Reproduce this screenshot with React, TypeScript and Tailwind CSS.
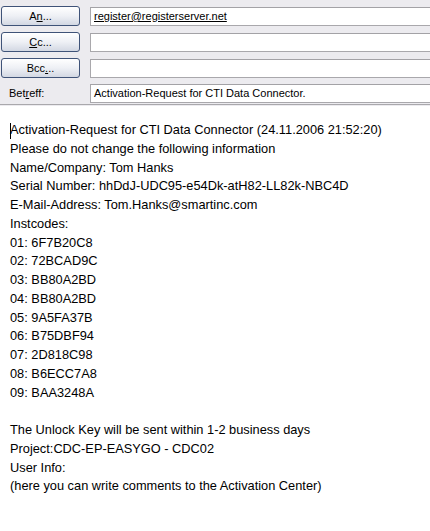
import React from "react";

const hdrFont = { fontFamily: '"Liberation Sans", Arial, sans-serif' };

function Btn({ children }: { children: React.ReactNode }) {
  return (
    <div className="w-[79px] h-[20px] ml-[1px] shrink-0 rounded-[3px] border border-[#3f5378] bg-gradient-to-b from-[#ffffff] via-[#eef0f5] to-[#d3d8e3] flex items-center justify-center text-[11px] text-black leading-none">
      {children}
    </div>
  );
}

function Field({ children }: { children?: React.ReactNode }) {
  return (
    <div className="flex-1 h-[19px] ml-[10px] border-t border-b border-l border-t-[#a3a2a6] border-b-[#a9a8ac] border-l-[#a9a8ac] bg-white flex items-center pl-[3px] text-[11px] text-black leading-none whitespace-nowrap overflow-hidden">
      {children}
    </div>
  );
}

const lines = [
  "Activation-Request for CTI Data Connector (24.11.2006 21:52:20)",
  "Please do not change the following information",
  "Name/Company: Tom Hanks",
  "Serial Number: hhDdJ-UDC95-e54Dk-atH82-LL82k-NBC4D",
  "E-Mail-Address: Tom.Hanks@smartinc.com",
  "Instcodes:",
  "01: 6F7B20C8",
  "02: 72BCAD9C",
  "03: BB80A2BD",
  "04: BB80A2BD",
  "05: 9A5FA37B",
  "06: B75DBF94",
  "07: 2D818C98",
  "08: B6ECC7A8",
  "09: BAA3248A",
  "",
  "The Unlock Key will be sent within 1-2 business days",
  "Project:CDC-EP-EASYGO - CDC02",
  "User Info:",
  "(here you can write comments to the Activation Center)",
];

export default function App() {
  return (
    <div className="w-[430px] h-[531px] bg-white overflow-hidden">
      <div className="bg-[#ecebef] pt-[6px] h-[104px] flex flex-col" style={hdrFont}>
        <div className="flex items-end h-[20px]">
          <Btn>
            A<span className="underline">n</span>...
          </Btn>
          <Field>
            <span className="underline">register@registerserver.net</span>
          </Field>
        </div>
        <div className="flex items-end h-[20px] mt-[6px]">
          <Btn>
            <span className="underline">C</span>c...
          </Btn>
          <Field />
        </div>
        <div className="flex items-end h-[20px] mt-[6px]">
          <Btn>
            Bcc<span className="underline">.</span>..
          </Btn>
          <Field />
        </div>
        <div className="flex items-center h-[20px] mt-[5px]">
          <div className="w-[80px] shrink-0 pl-[9px] text-[11px] text-black leading-none">
            Bet<span className="underline">r</span>eff:
          </div>
          <Field>Activation-Request for CTI Data Connector.</Field>
        </div>
      </div>
      <div className="h-[2px] bg-[#ecebef] border-t border-[#a9a8ac]" />
      <div
        className="pl-[10px] pt-[15px] text-[12.8px] leading-[18.75px] text-black"
        style={{ fontFamily: '"Liberation Sans", Arial, sans-serif' }}
      >
        {lines.map((l, i) => (
          <div key={i} className="whitespace-nowrap h-[18.75px] relative">
            {i === 0 && (
              <span className="absolute left-0 top-[2px] w-[1px] h-[16px] bg-black" />
            )}
            {l || "\u00a0"}
          </div>
        ))}
      </div>
    </div>
  );
}
